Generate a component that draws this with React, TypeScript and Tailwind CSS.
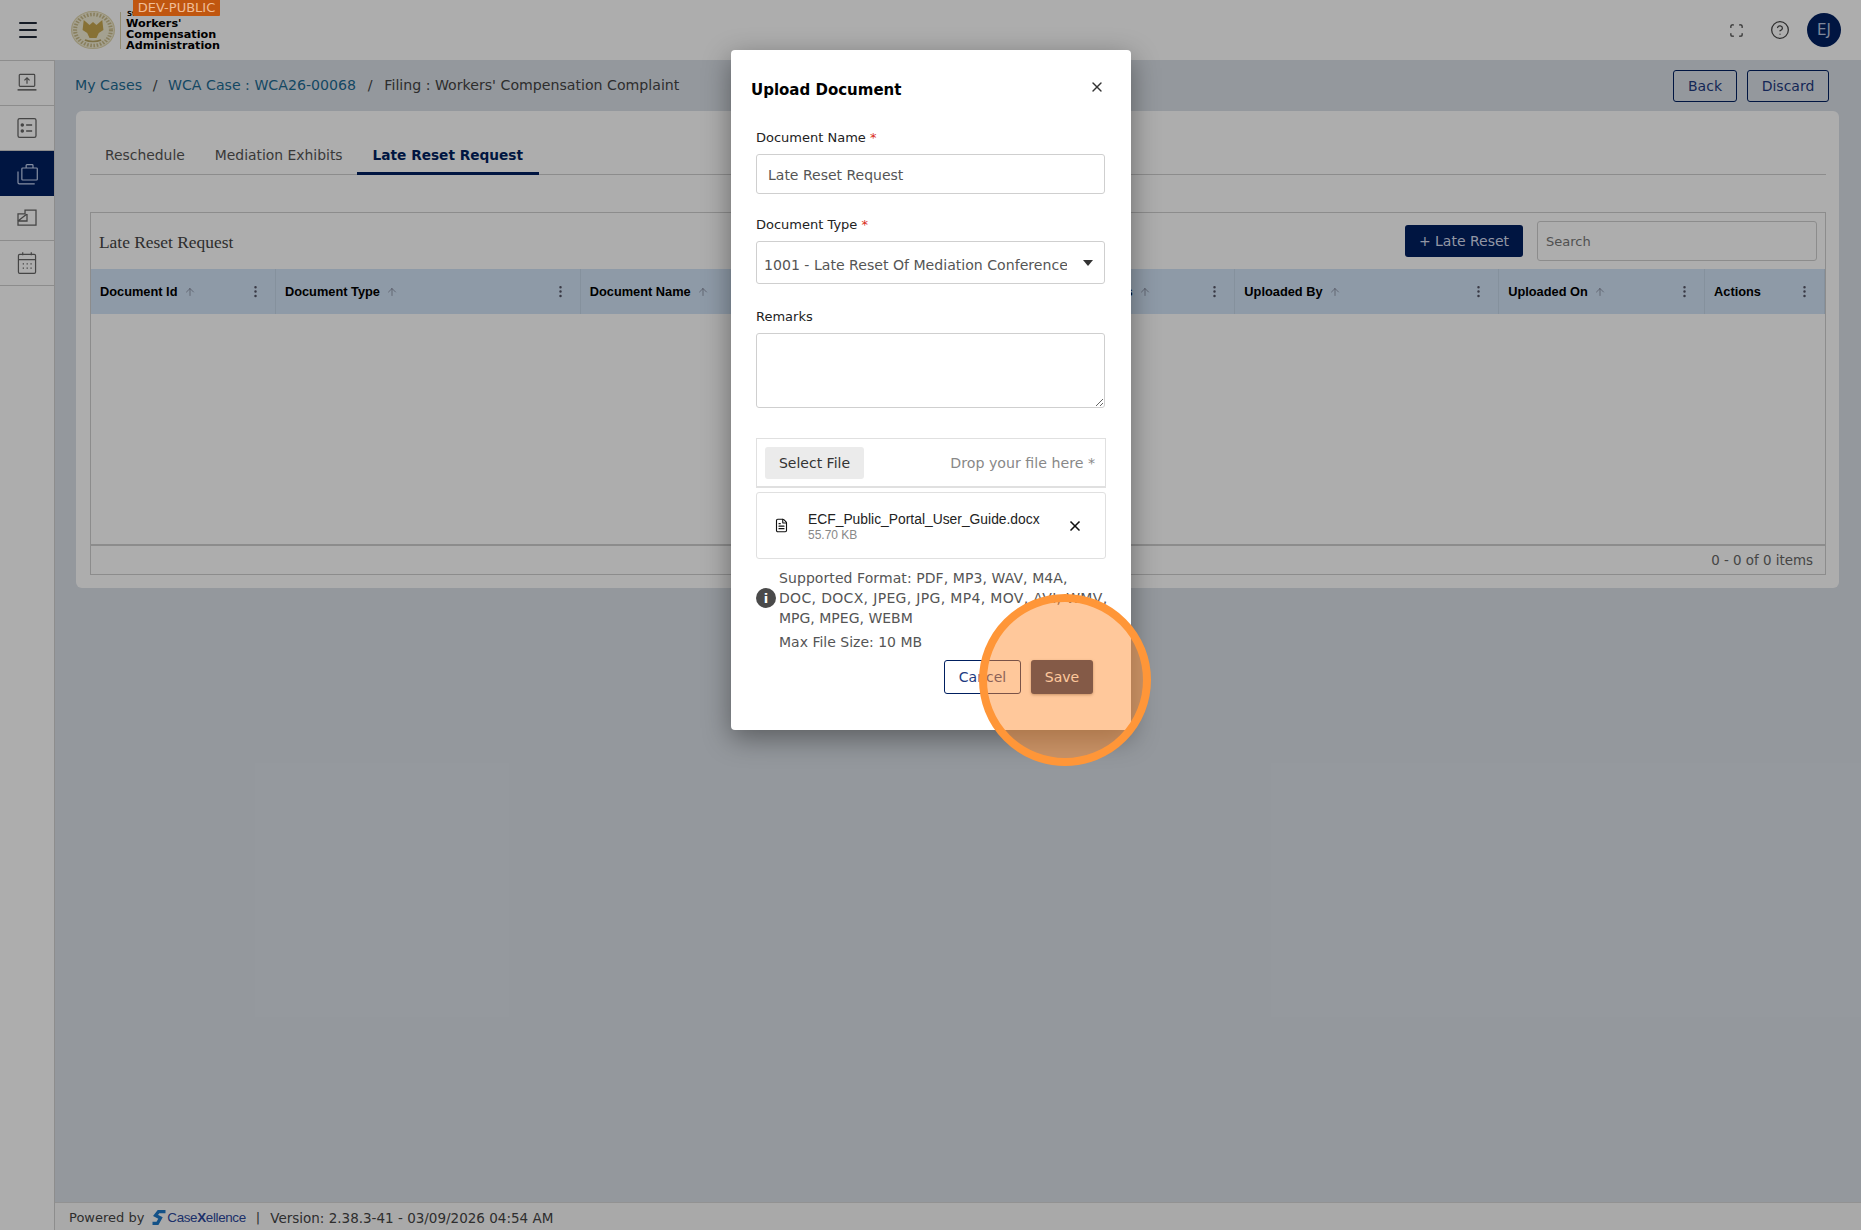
import { ArrowUp, CircleHelp, EllipsisVertical, FileText, Menu, Scan, X } from "lucide-react";

const navIcons = [
  // laptop upload
  <svg key="a" width="24" height="24" viewBox="0 0 28 28" fill="none" stroke="currentColor" strokeWidth="1.4">
    <rect x="5" y="4" width="18" height="14" rx="1" />
    <path d="M3 22h22" strokeWidth="1.8" />
    <path d="M14 15V8.5M11 11L14 8l3 3" />
  </svg>,
  // checklist
  <svg key="b" width="24" height="24" viewBox="0 0 28 28" fill="none" stroke="currentColor" strokeWidth="1.5">
    <rect x="3.5" y="3" width="21" height="22" rx="2" />
    <path d="M13 10.5h7M13 17.5h7" />
    <circle cx="8.5" cy="10.5" r="1.3" fill="currentColor" />
    <circle cx="8.5" cy="17.5" r="1.3" fill="currentColor" />
  </svg>,
  // briefcase stack
  <svg key="c" width="24" height="24" viewBox="0 0 28 28" fill="none" stroke="currentColor" strokeWidth="1.4">
    <rect x="8" y="7" width="18" height="14" rx="1" />
    <path d="M13 7V4a1 1 0 0 1 1-1h6a1 1 0 0 1 1 1v3" />
    <path d="M3.5 11v13a1.5 1.5 0 0 0 1.5 1.5h18" />
  </svg>,
  // folded note
  <svg key="d" width="24" height="24" viewBox="0 0 28 28" fill="none" stroke="currentColor" strokeWidth="1.5">
    <path d="M3.5 9.3h8.2V4.7h12.8v17.5h-21z" />
    <path d="M14 9.3v8.2H3.5M3.5 17.5l10-8" />
  </svg>,
  // calendar
  <svg key="e" width="24" height="24" viewBox="0 0 28 28" fill="none" stroke="currentColor" strokeWidth="1.4">
    <rect x="4" y="4" width="20" height="22" rx="1.5" />
    <path d="M4 10h20M9 1.5V5M19 1.5V5" />
    <path d="M9 15h1.5M13.5 15H15M18 15h1.5M9 20h1.5M13.5 20H15M18 20h1.5" strokeWidth="1.6" />
  </svg>,
];

const columns = [
  { name: "Document Id", width: "w-[185px]" },
  { name: "Document Type", width: "w-[305px]" },
  { name: "Document Name", width: "w-[504px]" },
  { name: "Status", width: "w-[151px]" },
  { name: "Uploaded By", width: "w-[264px]" },
  { name: "Uploaded On", width: "w-[206px]" },
  { name: "Actions", width: "w-[120px]", noSort: true },
];

function Seal() {
  return (
    <svg width="44" height="38" viewBox="0 0 38 38" preserveAspectRatio="none" className="shrink-0">
      <circle cx="19" cy="19" r="18.5" fill="#f2edd4" stroke="#e0d6ac" strokeWidth="1" />
      <circle cx="19" cy="19" r="15.5" fill="none" stroke="#c9bb8a" strokeWidth="3.5" strokeDasharray="1.4 1.4" />
      <path d="M11 9l5 5 3-3 3 3 5-5 1 10-4 3-2 5h-6l-2-5-4-3z" fill="#c7a74f" />
      <path d="M12 29c4 2 10 2 14 0" stroke="#b9a566" strokeWidth="1.5" fill="none" />
    </svg>
  );
}

function Logo() {
  return (
    <span className="ml-[8px] flex items-center font-['Liberation_Sans',sans-serif] text-[13.4px] text-[#2b479c]">
      <svg width="14" height="15" viewBox="0 0 14 15" className="mr-[1px]">
        <path d="M13.5 1.7H6.5L3.5 5.5l5 2.5-3 5.3H.5" fill="none" stroke="#1c78c8" strokeWidth="3.2" />
      </svg>
      <span className="tracking-[-0.35px]">
        Case<span className="font-bold">X</span>ellence
      </span>
    </span>
  );
}

export default function App() {
  return (
    <div className="relative flex h-[1230px] w-[1861px] flex-col overflow-hidden bg-[#dbe1e8] font-['DejaVu_Sans',sans-serif] text-[13px] text-[#333]">
      {/* Top bar */}
      <header className="flex h-[60px] shrink-0 items-center bg-white">
        <Menu size={24} strokeWidth={2} className="ml-[16px] text-[#1f2937]" />
        <div className="relative ml-[31px] flex h-[60px] items-center">
          <Seal />
          <div className="ml-[5px] h-[37px] w-px bg-[#d8cfa8]" />
          <div className="ml-[5px] pt-[8px] text-[11.2px] font-bold leading-[11px] text-black">
            <div>Workers'</div>
            <div>Compensation</div>
            <div>Administration</div>
          </div>
          <span className="absolute left-[56px] top-[9px] text-[7px] font-bold text-black">St</span>
        </div>
        <div className="ml-auto flex items-center pr-[20px]">
          <Scan size={15} strokeWidth={2} className="text-[#444]" />
          <CircleHelp size={20} strokeWidth={1.5} className="ml-[26px] text-[#444]" />
          <span className="ml-[17px] flex h-[34px] w-[34px] items-center justify-center rounded-full bg-[#001f60] text-[15px] text-[#b9c6e2]">
            EJ
          </span>
        </div>
      </header>

      <div className="flex min-h-0 flex-1">
        {/* Side nav */}
        <aside className="w-[55px] shrink-0 border-r border-t border-[#d0d0d0] bg-white">
          {navIcons.map((icon, i) => (
            <div
              key={i}
              className={
                i === 2
                  ? "flex h-[45px] items-center justify-center bg-[#001f60] text-[#c5d3f0]"
                  : "flex h-[45px] items-center justify-center border-b border-[#cfcfcf] text-[#666]"
              }
            >
              {icon}
            </div>
          ))}
        </aside>

        <main className="flex min-w-0 flex-1 flex-col">
          <div className="flex-1 pl-[21px] pr-[22px]">
            {/* Breadcrumb row */}
            <div className="flex h-[51px] items-center justify-between pt-[1px]">
              <div className="ml-[-1px] text-[14.15px] text-[#444]">
                <span className="text-[#1d6a92]">My Cases</span>
                <span className="mx-[10.6px]">/</span>
                <span className="text-[#1d6a92]">WCA Case : WCA26-00068</span>
                <span className="mx-[11.8px]">/</span>
                <span>Filing : Workers' Compensation Complaint</span>
              </div>
              <div className="mr-[10px] flex gap-[10px]">
                <button className="h-[32px] w-[64px] rounded-[3px] border border-[#001f60] text-[14px] text-[#1e3a80]">Back</button>
                <button className="h-[32px] w-[82px] rounded-[3px] border border-[#001f60] text-[14px] text-[#1e3a80]">Discard</button>
              </div>
            </div>

            {/* Card */}
            <section className="rounded-[6px] bg-white pb-[13px] pl-[14px] pr-[13px] pt-[24px]">
              <nav className="flex h-[40px] border-b border-[#cfcfcf]">
                <span className="flex h-[40px] items-center px-[15px] text-[13.9px] text-[#555]">Reschedule</span>
                <span className="flex h-[40px] items-center px-[15px] text-[13.9px] text-[#555]">Mediation Exhibits</span>
                <span className="ml-[-1px] flex h-[40px] items-center border-b-[3px] border-[#001f60] px-[16px] pt-[3px] text-[13.7px] font-bold text-[#001f60]">
                  Late Reset Request
                </span>
              </nav>

              <div className="mt-[37px] flex h-[363px] flex-col border border-[#cfcfcf]">
                <div className="flex h-[56px] items-center justify-between pl-[8px] pr-[8px]">
                  <span className="pt-[3px] font-['Liberation_Serif',serif] text-[17.4px] text-[#444]">Late Reset Request</span>
                  <div className="flex items-center gap-[14px]">
                    <button className="h-[32px] w-[118px] rounded-[3px] bg-[#001f60] text-[14px] text-[#d7def0]">+ Late Reset</button>
                    <div className="flex h-[40px] w-[280px] items-center rounded-[3px] border border-[#cfcfcf] pl-[8px] pt-[1px] text-[13px] text-[#777]">Search</div>
                  </div>
                </div>
                <div className="flex h-[45px] bg-[#d2e4f7] font-['Liberation_Sans',sans-serif] text-[12.8px] font-bold text-black">
                  {columns.map((c) => (
                    <div key={c.name} className={`${c.width} flex items-center border-r border-[#c4d6e8] pl-[9px]`}>
                      <span>{c.name}</span>
                      {!c.noSort && <ArrowUp size={12} strokeWidth={1.2} className="ml-[6px] text-[#667]" />}
                      <EllipsisVertical size={15} strokeWidth={2} className="ml-auto mr-[12px] text-[#556]" />
                    </div>
                  ))}
                </div>
                <div className="flex-1 border-b-2 border-[#cfcfcf]" />
                <div className="flex h-[28px] items-center justify-end pr-[12px] pt-[3px] text-[13.4px] text-[#666]">0 - 0 of 0 items</div>
              </div>
            </section>
          </div>

          <footer className="flex h-[28px] shrink-0 items-center border-t border-[#d8d8d8] bg-[#fafafa] pl-[14px] pt-[3px] text-[#444]">
            <span className="text-[13px]">Powered by</span>
            <Logo />
            <span className="mx-[10px] text-[13px]">|</span>
            <span className="text-[13.5px]">Version: 2.38.3-41 - 03/09/2026 04:54 AM</span>
          </footer>
        </main>
      </div>

      {/* Backdrop */}
      <div className="absolute inset-0 bg-black/32" />

      {/* Environment tag stays bright above the backdrop */}
      <span className="absolute left-[133px] top-0 flex h-[16px] w-[87px] items-center justify-center rounded-b-[1px] bg-[#c0560f] text-[13px] text-[#f0bd96]">
        DEV-PUBLIC
      </span>

      {/* Upload dialog */}
      <div className="absolute left-[731px] top-[50px] h-[680px] w-[400px] rounded-[4px] bg-white shadow-[0_8px_28px_rgba(0,0,0,0.4)]">
        <div className="flex h-[51px] items-end justify-between pl-[20px] pr-[26px]">
          <h2 className="text-[15px] font-bold leading-[22px] text-black">Upload Document</h2>
          <X size={16} strokeWidth={2} className="mb-[6px] text-[#333]" />
        </div>

        <div className="pl-[25px] pr-[26px]">
          <label className="mt-[27px] block leading-[20px] text-[#222]">
            Document Name <span className="text-[#d92d20]">*</span>
          </label>
          <input
            readOnly
            value="Late Reset Request"
            className="mt-[6px] block h-[40px] w-full rounded-[3px] border border-[#cfcfcf] pl-[11px] pt-[1px] text-[14px] text-[#555] outline-none"
          />

          <label className="mt-[21px] block leading-[20px] text-[#222]">
            Document Type <span className="text-[#d92d20]">*</span>
          </label>
          <div className="relative mt-[6px] flex h-[43px] items-center rounded-[3px] border border-[#cfcfcf] pl-[7px]">
            <span className="mt-[7px] w-[303px] overflow-hidden whitespace-nowrap text-[14.1px] text-[#555]">
              1001 - Late Reset Of Mediation Conference
            </span>
            <svg width="10" height="6" viewBox="0 0 10 6" className="absolute right-[11px] top-[18px]">
              <path d="M0 0h10L5 6z" fill="#333" />
            </svg>
          </div>

          <label className="mt-[23px] block leading-[20px] text-[#222]">Remarks</label>
          <textarea readOnly className="mt-[6px] block h-[75px] w-full rounded-[3px] border border-[#cfcfcf] outline-none" />

          <div className="mt-[30px] flex h-[50px] w-[350px] items-center justify-between border border-b-2 border-[#e0e0e0] pl-[8px] pr-[10px]">
            <span className="flex h-[32px] w-[99px] items-center justify-center rounded-[3px] bg-[#ebebeb] pt-[1px] text-[14px] text-[#333]">Select File</span>
            <span className="pt-[3px] text-[14.2px] text-[#888]">Drop your file here *</span>
          </div>

          <div className="mt-[4px] flex h-[67px] w-[350px] items-center rounded-[3px] border border-[#e0e0e0] pl-[17px] pr-[22px]">
            <FileText size={15} strokeWidth={1.8} className="text-[#111]" />
            <div className="ml-[19px] pt-[3px] font-['Liberation_Sans',sans-serif] leading-none">
              <div className="text-[13.85px] text-[#222]">ECF_Public_Portal_User_Guide.docx</div>
              <div className="mt-[2px] text-[12px] text-[#888]">55.70 KB</div>
            </div>
            <X size={16} strokeWidth={2.5} className="ml-auto text-[#111]" />
          </div>

          <div className="mt-[9px] flex w-[350px] items-center">
            <span className="flex h-[20px] w-[20px] shrink-0 items-center justify-center rounded-full bg-[#4a4a4a] text-[13px] font-bold leading-none text-white">i</span>
            <div className="ml-[3px] whitespace-nowrap text-[14px] leading-[20px] text-[#555]">
              <div className="tracking-[0.08px]">Supported Format: PDF, MP3, WAV, M4A,</div>
              <div className="tracking-[0.33px]">DOC, DOCX, JPEG, JPG, MP4, MOV, AVI, WMV,</div>
              <div>MPG, MPEG, WEBM</div>
            </div>
          </div>
          <div className="ml-[23px] mt-[4px] text-[14px] leading-[20px] text-[#555]">Max File Size: 10 MB</div>

          <div className="mr-[12px] mt-[8px] flex justify-end gap-[10px]">
            <button className="h-[34px] w-[77px] rounded-[3px] border border-[#001f60] text-[14px] text-[#1e3a80]">Cancel</button>
            <button className="h-[34px] w-[62px] rounded-[3px] bg-[#152c5e] text-[14px] text-white shadow-[0_1px_3px_rgba(0,0,0,0.4)]">Save</button>
          </div>
        </div>
      </div>

      {/* Click highlight */}
      <div className="absolute left-[979px] top-[594px] h-[172px] w-[172px] rounded-full border-[8px] border-[#ff9638] bg-[rgba(255,140,45,0.48)]" />
    </div>
  );
}
